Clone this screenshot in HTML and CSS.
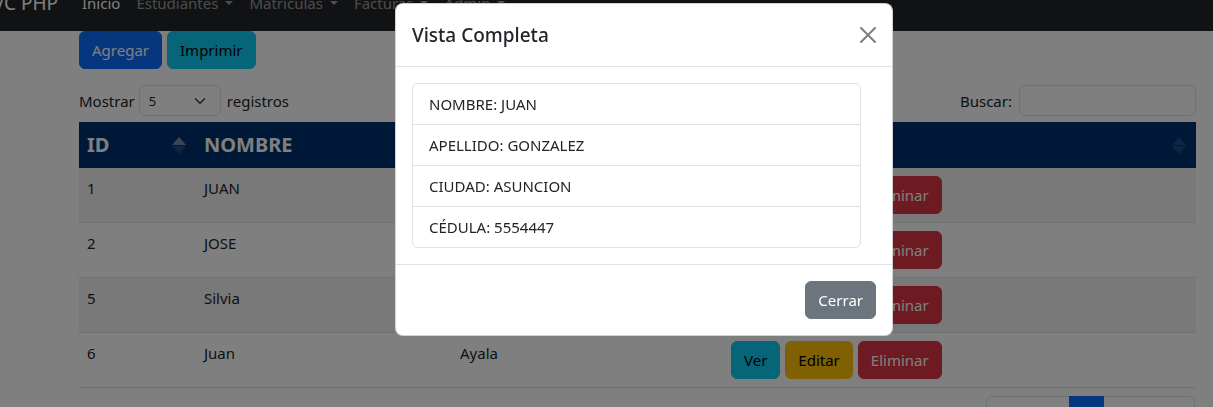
FILE: index.html
```html
<!DOCTYPE html>
<html lang="es">
<head>
<meta charset="utf-8">
<title>MVC PHP</title>
<link rel="stylesheet" href="styles.css">
</head>
<body>
<nav class="navbar">
  <div class="brand-box"><span class="brand">MVC PHP</span></div>
  <ul class="nav">
    <li><a class="nav-link active">Inicio</a></li>
    <li><a class="nav-link dropdown">Estudiantes</a></li>
    <li><a class="nav-link dropdown">Matriculas</a></li>
    <li><a class="nav-link dropdown">Facturas</a></li>
    <li><a class="nav-link dropdown">Admin</a></li>
  </ul>
</nav>

<main class="content">
  <div class="toolbar">
    <button class="btn btn-primary">Agregar</button>
    <button class="btn btn-info">Imprimir</button>
  </div>

  <div class="dt-top">
    <label class="length">Mostrar
      <span class="select"><span>5</span>
        <svg class="chev" viewBox="0 0 16 16" width="16" height="16"><path d="M2 5l6 6 6-6" fill="none" stroke="#343a40" stroke-width="2" stroke-linecap="round" stroke-linejoin="round"/></svg>
      </span>
      registros</label>
    <label class="search">Buscar:<span class="input"></span></label>
  </div>

  <table class="table">
    <colgroup>
      <col class="c-id"><col class="c-nombre"><col class="c-apellido"><col class="c-acciones">
    </colgroup>
    <thead>
      <tr>
        <th class="sort asc">ID</th>
        <th class="sort">NOMBRE</th>
        <th class="sort">APELLIDO</th>
        <th class="sort">ACCIONES</th>
      </tr>
    </thead>
    <tbody>
      <tr><td>1</td><td>JUAN</td><td>GONZALEZ</td><td><div class="actions"><button class="btn btn-info">Ver</button><button class="btn btn-warning">Editar</button><button class="btn btn-danger">Eliminar</button></div></td></tr>
      <tr><td>2</td><td>JOSE</td><td>BENITEZ</td><td><div class="actions"><button class="btn btn-info">Ver</button><button class="btn btn-warning">Editar</button><button class="btn btn-danger">Eliminar</button></div></td></tr>
      <tr><td>5</td><td>Silvia</td><td>Martinez</td><td><div class="actions"><button class="btn btn-info">Ver</button><button class="btn btn-warning">Editar</button><button class="btn btn-danger">Eliminar</button></div></td></tr>
      <tr><td>6</td><td>Juan</td><td>Ayala</td><td><div class="actions"><button class="btn btn-info">Ver</button><button class="btn btn-warning">Editar</button><button class="btn btn-danger">Eliminar</button></div></td></tr>
    </tbody>
  </table>

  <div class="dt-bottom">
    <div class="info">Mostrando registros del 1 al 4 de un total de 4 registros</div>
    <ul class="pagination">
      <li class="page disabled">Anterior</li>
      <li class="page current">1</li>
      <li class="page disabled">Siguiente</li>
    </ul>
  </div>
</main>

<div class="backdrop">
  <div class="modal">
    <div class="modal-header">
      <h5 class="modal-title">Vista Completa</h5>
      <button class="btn-close" aria-label="Close">
        <svg viewBox="0 0 16 16" width="16" height="16"><path d="M.293.293a1 1 0 0 1 1.414 0L8 6.586 14.293.293a1 1 0 1 1 1.414 1.414L9.414 8l6.293 6.293a1 1 0 0 1-1.414 1.414L8 9.414l-6.293 6.293a1 1 0 0 1-1.414-1.414L6.586 8 .293 1.707a1 1 0 0 1 0-1.414z" fill="#000"/></svg>
      </button>
    </div>
    <div class="modal-body">
      <ul class="list-group">
        <li>NOMBRE: JUAN</li>
        <li>APELLIDO: GONZALEZ</li>
        <li>CIUDAD: ASUNCION</li>
        <li>CÉDULA: 5554447</li>
      </ul>
    </div>
    <div class="modal-footer">
      <button class="btn btn-secondary">Cerrar</button>
    </div>
  </div>
</div>
</body>
</html>
```

FILE: styles.css
```css
html, body {
  margin: 0;
  height: 407px;
  overflow: hidden;
}
body {
  font-family: "Noto Sans", "Open Sans", sans-serif;
  font-size: 15px;
  line-height: 24px;
  color: #212529;
  background: #fff;
}

/* navbar */
.navbar {
  display: flex;
  align-items: center;
  height: 56px;
  margin-top: -25px;
  background: #212529;
}
.brand-box {
  width: 58px;
  margin-right: 16px;
  display: flex;
  justify-content: flex-end;
}
.brand {
  font-size: 19px;
  line-height: 30px;
  color: #fff;
  white-space: nowrap;
}
.nav {
  display: flex;
  list-style: none;
  margin: 0;
  padding: 0;
}
.nav-link {
  display: block;
  padding: 8px;
  color: rgba(255, 255, 255, .55);
  white-space: nowrap;
}
.nav-link.active { color: #fff; }
.dropdown::after {
  content: "";
  display: inline-block;
  margin-left: 7px;
  vertical-align: 4px;
  border-top: 4px solid;
  border-right: 4px solid transparent;
  border-left: 4px solid transparent;
}

/* content */
.content {
  margin-left: 79px;
  width: 1117px;
}
.toolbar {
  display: flex;
  gap: 5px;
}
.btn {
  font: inherit;
  line-height: 24px;
  padding: 6px 12px;
  border: 1px solid transparent;
  border-radius: 6px;
  white-space: nowrap;
}
.btn-primary { background: #0d6efd; border-color: #0d6efd; color: #fff; }
.btn-info { background: #0dcaf0; border-color: #0dcaf0; color: #000; }
.btn-warning { background: #ffc107; border-color: #ffc107; color: #000; }
.btn-danger { background: #dc3545; border-color: #dc3545; color: #fff; }
.btn-secondary { background: #6c757d; border-color: #6c757d; color: #fff; }

.dt-top {
  display: flex;
  justify-content: space-between;
  align-items: center;
  margin-top: 16px;
  height: 31px;
}
.length, .search {
  display: flex;
  align-items: center;
  white-space: nowrap;
}
.select {
  display: inline-flex;
  align-items: center;
  justify-content: space-between;
  box-sizing: border-box;
  width: 82px;
  height: 31px;
  margin: 0 6px 0 4px;
  padding: 0 14px 0 9px;
  border: 1px solid #dee2e6;
  border-radius: 6px;
  font-size: 13px;
}
.chev { width: 12px; height: 12px; }
.input {
  display: inline-block;
  box-sizing: border-box;
  width: 177px;
  height: 31px;
  margin-left: 7px;
  border: 1px solid #dee2e6;
  border-radius: 6px;
}

/* table */
.table {
  width: 100%;
  table-layout: fixed;
  border-collapse: collapse;
  margin-top: 6px;
}
.c-id { width: 117px; }
.c-nombre { width: 256px; }
.c-apellido { width: 271px; }
.table th {
  position: relative;
  background: #003070;
  color: #fff;
  font-size: 20px;
  font-weight: 700;
  line-height: 30px;
  text-align: left;
  padding: 8px 30px 8px 8px;
}
.sort::before, .sort::after {
  content: "";
  position: absolute;
  right: 10px;
  border-left: 7px solid transparent;
  border-right: 7px solid transparent;
}
.sort::before {
  top: 15px;
  border-bottom: 8px solid rgba(255, 255, 255, .125);
}
.sort::after {
  top: 24px;
  border-top: 8px solid rgba(255, 255, 255, .125);
}
.sort.asc::before { border-bottom-color: rgba(255, 255, 255, .45); }
.table td {
  padding: 8px;
  vertical-align: top;
  border-bottom: 1px solid #dee2e6;
}
.table tbody tr:nth-child(odd) td { background: #f2f2f2; }
.actions {
  display: flex;
  gap: 5px;
}

.dt-bottom {
  display: flex;
  justify-content: space-between;
  align-items: flex-start;
  margin-top: 8px;
}
.info { padding-top: 13px; }
.pagination {
  display: flex;
  list-style: none;
  margin: 0 1px 0 0;
  padding: 0;
}
.page {
  padding: 6px 12px;
  border: 1px solid #dee2e6;
  margin-left: -1px;
  color: #6c757d;
}
.page:first-child { border-radius: 6px 0 0 6px; }
.page:last-child { border-radius: 0 6px 6px 0; }
.page.current {
  background: #0d6efd;
  border-color: #0d6efd;
  color: #fff;
  position: relative;
}

/* modal */
.backdrop {
  position: fixed;
  inset: 0;
  background: rgba(0, 0, 0, .5);
  padding: 3px 0 0 395px;
}
.modal {
  width: 498px;
  box-sizing: border-box;
  background: #fff;
  border: 1px solid rgba(0, 0, 0, .175);
  border-radius: 8px;
}
.modal-header {
  display: flex;
  align-items: center;
  padding: 16px;
  border-bottom: 1px solid #dee2e6;
}
.modal-title {
  margin: 0;
  font-size: 19px;
  font-weight: 500;
  line-height: 30px;
}
.btn-close {
  display: flex;
  box-sizing: content-box;
  width: 16px;
  height: 16px;
  padding: 8px;
  margin: -8px -8px -8px auto;
  border: 0;
  background: transparent;
  opacity: .5;
}
.modal-body { padding: 16px; }
.list-group {
  list-style: none;
  margin: 0;
  padding: 0;
  width: 447px;
  border: 1px solid #dee2e6;
  border-radius: 6px;
}
.list-group li {
  padding: 8px 16px;
  border-bottom: 1px solid #dee2e6;
}
.list-group li:last-child { border-bottom: 0; }
.modal-footer {
  display: flex;
  justify-content: flex-end;
  padding: 12px;
  border-top: 1px solid #dee2e6;
}
.modal-footer .btn { margin: 4px; }
```
